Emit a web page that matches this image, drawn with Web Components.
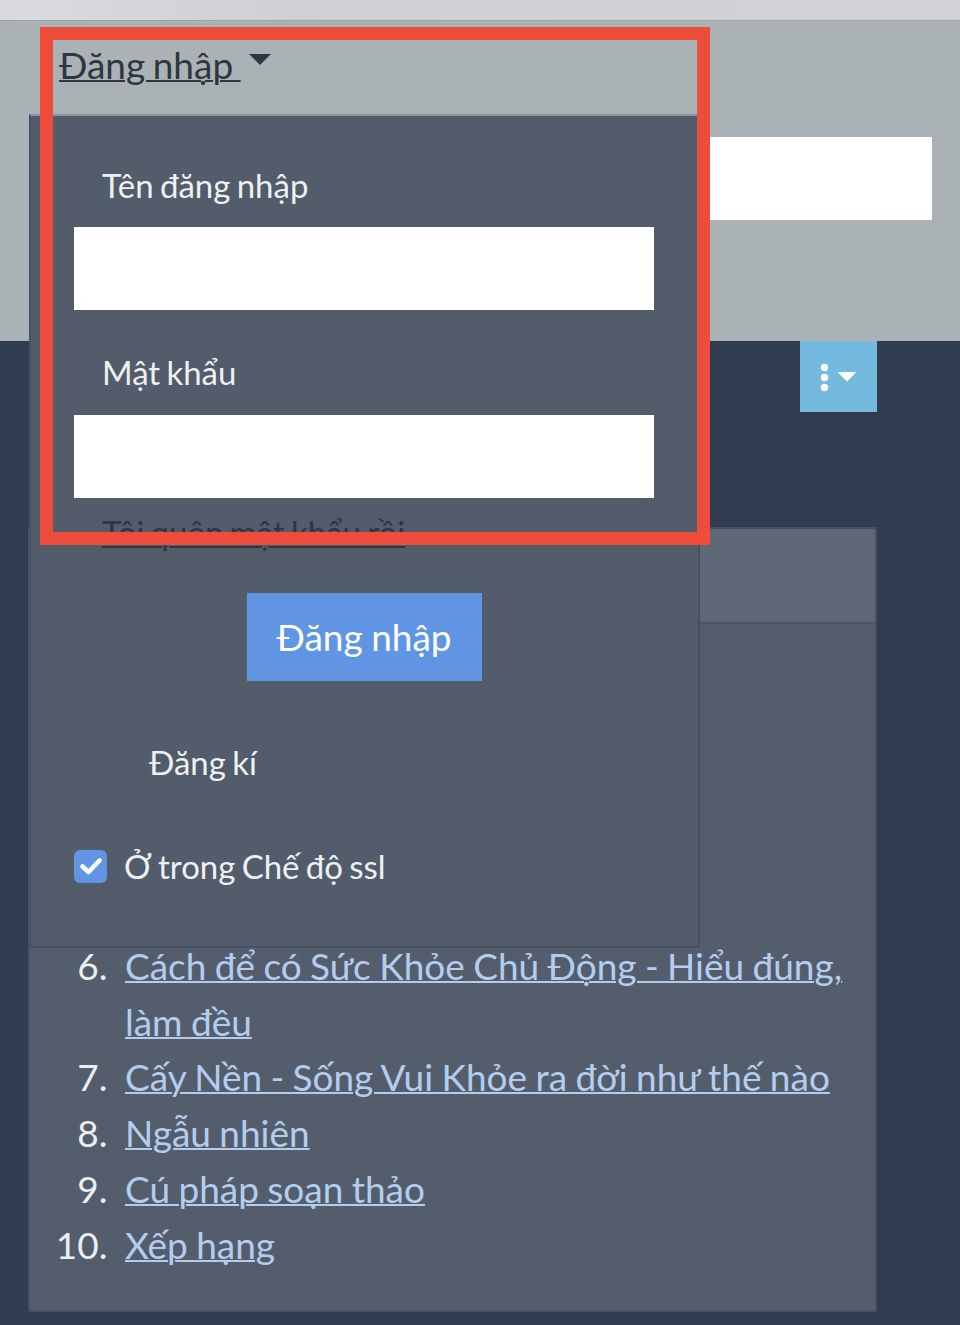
<!DOCTYPE html>
<html lang="vi">
<head>
<meta charset="utf-8">
<style>
    html, body { margin: 0; padding: 0; }
    body {
        width: 960px;
        height: 1325px;
        overflow: hidden;
        position: relative;
        background: #303c50;
        font-family: Lato, "Noto Sans", sans-serif;
    }
</style>
</head>
<body>
<top-header></top-header>
<page-content>
    <link-panel></link-panel>
</page-content>
<login-menu></login-menu>
<red-mark></red-mark>

<script>
class TopHeader extends HTMLElement {
    constructor() {
        super();
        this.attachShadow({ mode: "open" });
    }

    connectedCallback() {
        this.shadowRoot.innerHTML = `
            <style>
                :host { display: block; }
                .chrome {
                    height: 20px;
                    background: linear-gradient(90deg, #d9dbdf, #ced0d6 30%, #d0d2d8);
                    border-bottom: 1px solid #9ea4a8;
                }
                .bar {
                    height: 320px;
                    box-sizing: border-box;
                    background: #abb2b6;
                    padding: 22px 0 0 59px;
                    position: relative;
                }
                a {
                    color: #2f3640;
                    font-size: 37px;
                    line-height: 44px;
                    word-spacing: -2px;
                    text-decoration: underline;
                    text-decoration-thickness: 2px;
                    white-space: pre;
                }
                .caret {
                    display: inline-block;
                    width: 0;
                    height: 0;
                    margin-left: 8px;
                    vertical-align: 14px;
                    border-left: 11px solid transparent;
                    border-right: 11px solid transparent;
                    border-top: 11px solid #2f3640;
                }
                .search {
                    position: absolute;
                    right: 28px;
                    top: 116px;
                    width: 300px;
                    height: 83px;
                    background: #fff;
                }
            </style>
            <div class="chrome"></div>
            <div class="bar">
                <a href="#">Đăng nhập </a><span class="caret"></span>
                <div class="search"></div>
            </div>
        `;
    }
}

customElements.define("top-header", TopHeader);

class PageContent extends HTMLElement {
    constructor() {
        super();
        this.attachShadow({ mode: "open" });
    }

    connectedCallback() {
        this.shadowRoot.innerHTML = `
            <style>
                :host { display: block; padding: 0 83px 0 28px; }
                .tools {
                    display: flex;
                    justify-content: flex-end;
                    height: 186px;
                }
                .kebab {
                    width: 77px;
                    height: 71px;
                    background: #74bade;
                    display: flex;
                    align-items: center;
                    justify-content: center;
                }
            </style>
            <div class="tools">
                <div class="kebab">
                    <svg width="42" height="30" viewBox="0 0 42 30">
                        <circle cx="6.500" cy="5.500" r="3.700" fill="#fff"/>
                        <circle cx="6.500" cy="15.500" r="3.700" fill="#fff"/>
                        <circle cx="6.500" cy="25.500" r="3.700" fill="#fff"/>
                        <path d="M19.500 10h19l-9.500 9.500z" fill="#fff"/>
                    </svg>
                </div>
            </div>
            <slot></slot>
        `;
    }
}

customElements.define("page-content", PageContent);

class LinkPanel extends HTMLElement {
    constructor() {
        super();
        this.attachShadow({ mode: "open" });
    }

    connectedCallback() {
        const links = [
            [6, "Cách để có Sức Khỏe Chủ Động - Hiểu đúng, làm đều"],
            [7, "Cấy Nền - Sống Vui Khỏe ra đời như thế nào"],
            [8, "Ngẫu nhiên"],
            [9, "Cú pháp soạn thảo"],
            [10, "Xếp hạng"]
        ];

        this.shadowRoot.innerHTML = `
            <style>
                :host {
                    display: block;
                    box-sizing: border-box;
                    width: 849px;
                    height: 785px;
                    background: #535d6c;
                    border: 2px solid #465062;
                }
                .head {
                    height: 93px;
                    background: #5f6877;
                    border-bottom: 2px solid #4b5565;
                }
                ul {
                    list-style: none;
                    margin: 0;
                    padding: 314px 30px 0 0;
                    color: #eceef0;
                    font-size: 37px;
                    line-height: 55.700px;
                    word-spacing: -1.100px;
                }
                li { display: flex; }
                .num {
                    flex: none;
                    width: 77.500px;
                    text-align: right;
                    margin-right: 17.500px;
                }
                a { color: #b3cdee; text-decoration-thickness: 2px; }
            </style>
            <div class="head"></div>
            <ul>
                ${links.map(item => `
                    <li><span class="num">${item[0]}.</span><span><a href="#">${item[1]}</a></span></li>
                `).join("")}
            </ul>
        `;
    }
}

customElements.define("link-panel", LinkPanel);

class LoginMenu extends HTMLElement {
    constructor() {
        super();
        this.attachShadow({ mode: "open" });
    }

    connectedCallback() {
        this.shadowRoot.innerHTML = `
            <style>
                :host {
                    display: block;
                    position: absolute;
                    left: 29px;
                    top: 114px;
                    width: 671px;
                    height: 834px;
                    box-sizing: border-box;
                    background: #525c6b;
                    border: 2px solid #7f868e;
                    border-color: #8e959b #465062 #465062 #465062;
                    padding: 47px 44px 0 43px;
                    color: #eef0f2;
                    font-size: 33px;
                    line-height: 44px;
                    word-spacing: -2.200px;
                }
                label { display: block; padding-left: 28px; height: 44px; }
                .field {
                    height: 83px;
                    background: #fff;
                    margin: 20px 0 40px;
                }
                .field.last { margin: 21px 0 0; }
                .forgot {
                    display: block;
                    margin: 12px 0 0 28px;
                    color: #2c3646;
                    text-decoration-thickness: 2px;
                }
                .submit {
                    display: block;
                    width: 235px;
                    height: 88px;
                    margin: 39px auto 0;
                    background: #5f95e2;
                    color: #fff;
                    font-size: 37px;
                    line-height: 88px;
                    word-spacing: -1px;
                    text-align: center;
                }
                .signup { margin: 59px 0 0 75px; }
                .remember {
                    display: flex;
                    align-items: center;
                    gap: 17px;
                    margin-top: 60px;
                }
                .box {
                    flex: none;
                    width: 33px;
                    height: 33px;
                    border-radius: 6px;
                    background: #5f95e2;
                    display: flex;
                    align-items: center;
                    justify-content: center;
                }
            </style>
            <label>Tên đăng nhập</label>
            <div class="field"></div>
            <label>Mật khẩu</label>
            <div class="field last"></div>
            <a class="forgot" href="#">Tôi quên mật khẩu rồi</a>
            <div class="submit">Đăng nhập</div>
            <div class="signup">Đăng kí</div>
            <div class="remember">
                <span class="box">
                    <svg width="22" height="18" viewBox="0 0 22 18">
                        <path d="M2.500 9.500l6 5.500L19.500 3.500" fill="none" stroke="#fff" stroke-width="4.500" stroke-linecap="round" stroke-linejoin="round"/>
                    </svg>
                </span>
                <span>Ở trong Chế độ ssl</span>
            </div>
        `;
    }
}

customElements.define("login-menu", LoginMenu);

class RedMark extends HTMLElement {
    constructor() {
        super();
        this.attachShadow({ mode: "open" });
    }

    connectedCallback() {
        this.shadowRoot.innerHTML = `
            <style>
                :host {
                    display: block;
                    position: absolute;
                    left: 40px;
                    top: 27px;
                    width: 670px;
                    height: 518px;
                    box-sizing: border-box;
                    border: 13.500px solid #ef4d3c;
                    pointer-events: none;
                }
            </style>
        `;
    }
}

customElements.define("red-mark", RedMark);
</script>
</body>
</html>
